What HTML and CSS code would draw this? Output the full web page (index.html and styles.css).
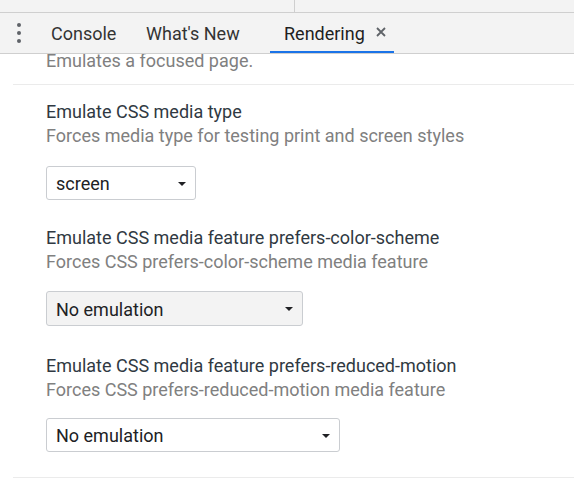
FILE: index.html
```html
<!DOCTYPE html>
<html>
<head>
<meta charset="utf-8">
<link rel="stylesheet" href="styles.css">
</head>
<body>
<div class="topstrip"><div class="topstrip-left"></div></div>
<div class="tabbar">
  <div class="menu"><span class="dot"></span><span class="dot"></span><span class="dot"></span></div>
  <div class="tab tab-console">Console</div>
  <div class="tab tab-new">What's New</div>
  <div class="tab tab-active">Rendering<svg class="close" width="10" height="10" viewBox="0 0 10 10"><path d="M1 1 L9 9 M9 1 L1 9" stroke="#5f6368" stroke-width="1.8" fill="none"/></svg></div>
</div>
<div class="panel">
  <div class="section section-first">
    <div class="desc">Emulates a focused page.</div>
  </div>
  <div class="section">
    <div class="title">Emulate CSS media type</div>
    <div class="desc">Forces media type for testing print and screen styles</div>
    <div class="select select-media">screen<span class="caret"></span></div>
    <div class="title title-next">Emulate CSS media feature prefers-color-scheme</div>
    <div class="desc">Forces CSS prefers-color-scheme media feature</div>
    <div class="select select-scheme">No emulation<span class="caret"></span></div>
    <div class="title title-next title-last">Emulate CSS media feature prefers-reduced-motion</div>
    <div class="desc">Forces CSS prefers-reduced-motion media feature</div>
    <div class="select select-motion">No emulation<span class="caret"></span></div>
  </div>
</div>
</body>
</html>
```
FILE: styles.css
```css
html, body {
  margin: 0;
  padding: 0;
  background: #ffffff;
  font-family: Roboto, "Liberation Sans", sans-serif;
  width: 574px;
  height: 482px;
  overflow: hidden;
}
.topstrip {
  height: 12px;
  background: #f3f3f3;
  border-bottom: 1px solid #cfcfcf;
}
.topstrip-left {
  width: 294px;
  height: 12px;
  border-right: 1px solid #cfcfcf;
}
.tabbar {
  height: 40px;
  background: #f3f3f3;
  border-bottom: 1px solid #cfcfcf;
  display: flex;
  align-items: stretch;
  position: relative;
  z-index: 2;
}
.menu {
  width: 38px;
  display: flex;
  flex-direction: column;
  align-items: center;
  justify-content: center;
  gap: 4px;
}
.dot {
  width: 4px;
  height: 4px;
  border-radius: 50%;
  background: #5f6368;
}
.tab {
  display: flex;
  align-items: center;
  font-size: 18px;
  color: #333333;
  padding: 0 14px;
  box-sizing: border-box;
  flex-shrink: 0;
}
.tab-console { margin-left: -1px; width: 95px; }
.tab-new { width: 138px; }
.tab-active {
  color: #1f1f1f;
  width: 124px;
  border-bottom: 2px solid #1a73e8;
  padding: 2px 0 0 14px;
}
.close {
  flex-shrink: 0;
  margin-left: 11px;
  margin-top: -3px;
}
.panel {
  height: 428px;
  overflow: hidden;
  padding-left: 13px;
}
.section {
  border-bottom: 1px solid #ebebeb;
  padding-left: 33px;
}
.section-first {
  margin-top: -5px;
  padding-bottom: 11px;
}
.section + .section {
  padding-top: 15px;
  padding-bottom: 25px;
}
.title {
  font-size: 18px;
  line-height: 24px;
  color: #303942;
}
.title-next {
  margin-top: 26px;
}
.title-last {
  margin-top: 28px;
}
.desc {
  font-size: 18px;
  line-height: 24px;
  color: #808080;
}
.select {
  margin-top: 18px;
  height: 34px;
  box-sizing: border-box;
  border: 1px solid #cacdd1;
  border-radius: 3px;
  background: #ffffff;
  display: flex;
  align-items: center;
  justify-content: space-between;
  padding: 1px 9px 0 9px;
  font-size: 18px;
  color: #202124;
}
.select-media { width: 150px; }
.select-scheme { width: 257px; background: #f3f3f3; height: 35px; margin-top: 17px; }
.select-motion { width: 294px; margin-top: 16px; }
.caret {
  width: 0;
  height: 0;
  border-left: 4px solid transparent;
  border-right: 4px solid transparent;
  border-top: 4px solid #202124;
}
```
